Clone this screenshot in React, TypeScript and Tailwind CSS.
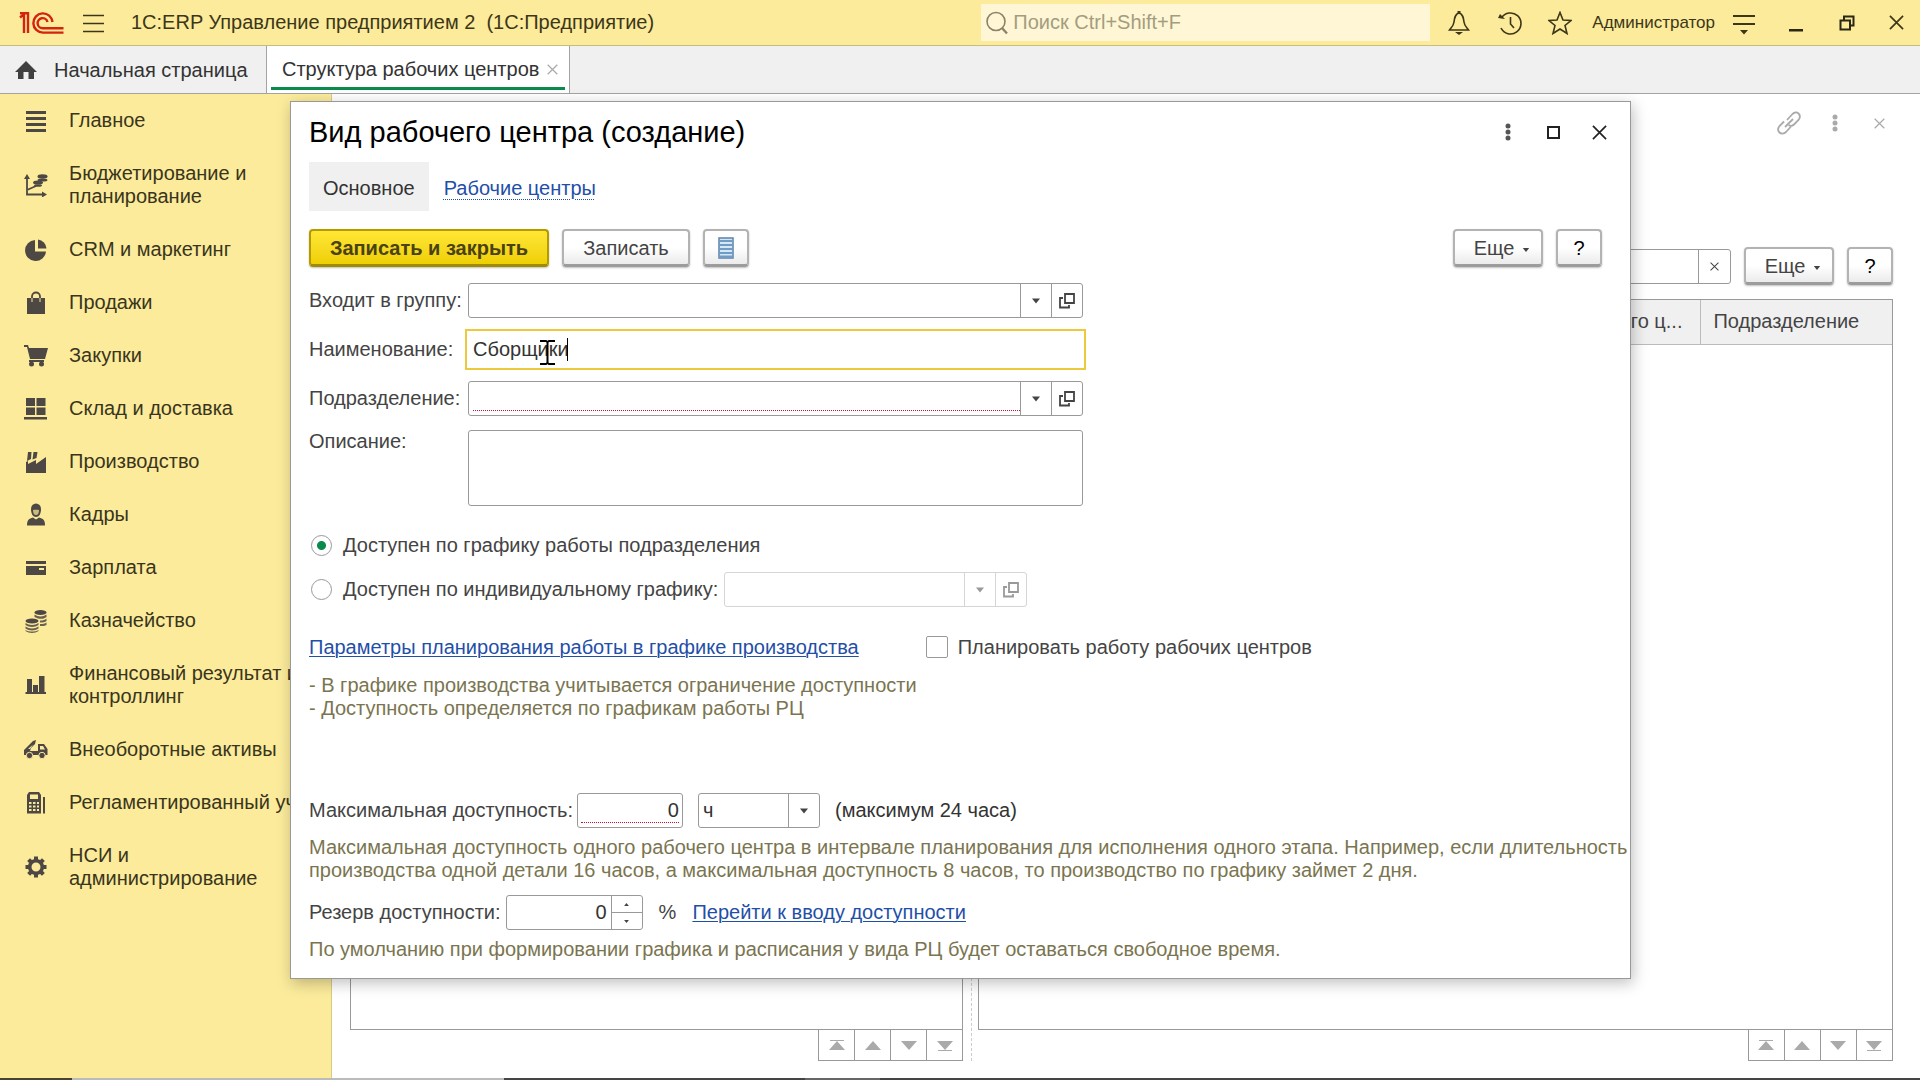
import React from "react";

type IconProps = { className?: string };

const Logo = () => (
  <svg className="h-6 w-12" viewBox="0 0 48 24" fill="none" stroke="#d4230f" strokeWidth="2.4">
    <path d="M3 6.5 L7 3.2 V22" />
    <path d="M3 2.2 H11 V22" />
    <path d="M35.5 11 A9.6 9.6 0 1 0 26 21.6 H46.5" />
    <path d="M30.5 11 A5 5 0 1 0 26 17.2 H46.5" />
  </svg>
);

const MenuIcon = () => (
  <svg className="h-6 w-6" viewBox="0 0 24 24" stroke="#3d3618" strokeWidth="1.6">
    <path d="M1 4.5 H22 M1 12.5 H22 M1 20.5 H22" />
  </svg>
);

const HomeIcon = () => (
  <svg className="h-6 w-6" viewBox="0 0 24 24" fill="#404040">
    <path d="M12 2 L23 13 H20 V20 H14.5 V13 H9.5 V20 H4 V13 H1 Z" />
  </svg>
);

const CrossIcon = ({ className }: IconProps) => (
  <svg className={className} viewBox="0 0 16 16" fill="none" stroke="currentColor" strokeWidth="1.8">
    <path d="M1 1 L15 15 M15 1 L1 15" />
  </svg>
);

const DotsIcon = ({ className }: IconProps) => (
  <svg className={className} viewBox="0 0 6 18" fill="currentColor">
    <circle cx="3" cy="3" r="2.5" />
    <circle cx="3" cy="9" r="2.5" />
    <circle cx="3" cy="15" r="2.5" />
  </svg>
);

const Caret = ({ className }: IconProps) => (
  <svg className={className} viewBox="0 0 8 5" fill="currentColor">
    <path d="M0 0 H8 L4 5 Z" />
  </svg>
);

const OpenIcon = () => (
  <svg className="h-4 w-4" viewBox="0 0 16 16" fill="none" stroke="currentColor" strokeWidth="1.8">
    <path d="M6 1 H15 V10 H6 Z" />
    <path d="M4 5 H1 V14.5 H10 V12" />
  </svg>
);

const icons: Record<string, React.ReactNode> = {
  main: <path d="M2 2 H22 V5 H2 Z M2 8 H22 V11 H2 Z M2 14 H22 V17 H2 Z M2 20 H22 V23 H2 Z" />,
  budget: (
    <>
      <path d="M3 4 V21.5 H20 M3 17 L12 13" fill="none" stroke="currentColor" strokeWidth="1.8" />
      <path d="M0 6 L3 1 L6 6 Z M18 18.5 L23 21.5 L18 24.5 Z" />
      <ellipse cx="18.5" cy="3.5" rx="5" ry="2.2" />
      <ellipse cx="18.5" cy="7" rx="5" ry="1.6" />
      <ellipse cx="14" cy="9.5" rx="5" ry="2" />
      <ellipse cx="14" cy="12.5" rx="4" ry="1.3" />
    </>
  ),
  crm: (
    <>
      <path d="M11 2 A10.5 10.5 0 1 0 22 13.5 H11 Z" />
      <path d="M14 1.5 A9.5 9.5 0 0 1 22.5 10.5 H14 Z" />
    </>
  ),
  sales: (
    <>
      <path d="M3 7 H21 V23 H3 Z" />
      <path d="M8 7 V5.5 A4 4 0 0 1 16 5.5 V7" fill="none" stroke="currentColor" strokeWidth="1.8" />
      <path d="M8 7 V11 M16 7 V11" stroke="#fbeb9b" />
    </>
  ),
  cart: (
    <>
      <path d="M0 1 H4 L5 4 H24 L21 15 H6 L3 3 H0 Z" />
      <path d="M5 16 H20 V18 H5 Z" />
      <circle cx="7.5" cy="20" r="2.5" />
      <circle cx="17.5" cy="20" r="2.5" />
    </>
  ),
  stock: <path d="M2 1 H11 V9 H2 Z M12.5 1 H21.5 V9 H12.5 Z M2 10.5 H11 V18 H2 Z M12.5 10.5 H21.5 V18 H12.5 Z M0 20 H23 V22.5 H0 Z" />,
  factory: (
    <>
      <path d="M2 12 L4 11 V14 L12 10 V14 L22 7 V23 H2 Z" />
      <path d="M4 2 H7.5 L7 9 L3 11 Z M9.5 2 H13.5 L12.5 8 L8.5 9.5 Z" />
    </>
  ),
  staff: (
    <>
      <path d="M7 6 A5 5.5 0 0 1 17 6 C17 11 15 14 12 14 C9 14 7 11 7 6 Z" />
      <path d="M9 7 C11 6.5 13 6.5 15 7 C15 10 14 12 12 12 C10 12 9 10 9 7 Z" fill="#c8bb7d" />
      <path d="M3 22.5 C3 17 5 15.5 9 14.5 L12 16.5 L15 14.5 C19 15.5 21 17 21 22.5 Z" />
    </>
  ),
  card: (
    <>
      <path d="M2 5 H22 V8 H2 Z M2 10 H22 V19 H2 Z" />
      <path d="M15 12 H20 V14 H15 Z" fill="#fbeb9b" />
    </>
  ),
  coins: (
    <>
      <ellipse cx="16.5" cy="3.5" rx="6" ry="2.6" />
      <path d="M10.5 5.5 C14 8 19 8 22.5 5.5 V8 C20 10 17 10 14 9.5 L10.500 8 Z M16 11.5 C19 11.500 21 11 22.500 9.500 V12 C21 13 19 13.500 16 13.500 Z M16 15 C19 15 21 14.500 22.500 13.500 V16 C21 17 19 17 16 17 Z" opacity=".85" />
      <ellipse cx="8" cy="12" rx="6.5" ry="2.6" />
      <path d="M1.5 14 C5 16.5 11 16.5 14.5 14 V16 C11 18.500 5 18.500 1.500 16 Z M1.500 17.500 C5 20 11 20 14.500 17.500 V19.500 C11 22 5 22 1.500 19.500 Z M1.500 21 C5 23 11 23 14.500 21 V22 C11 24.500 5 24.500 1.500 22 Z" opacity=".85" />
    </>
  ),
  chart: <path d="M3 6 H8 V19 H9 V12 H14 V19 H15 V3 H20.5 V19 H22 V21 H1.5 V19 H3 Z" />,
  truck: (
    <>
      <path d="M0 12 L9 3 L12 2 L11 6 L7 10 L6 13 H14 V6 H20 L23.5 11 V17 H0 Z" />
      <path d="M16 8 H19 L21 11.5 H16 Z M4 11 L9 6.5 L6 11 Z" fill="#fbeb9b" />
      <circle cx="5.5" cy="17.5" r="3.2" stroke="#fbeb9b" />
      <circle cx="18" cy="17.5" r="3.2" stroke="#fbeb9b" />
    </>
  ),
  report: (
    <>
      <path d="M5 1 H15 L17 4 V22.5 H3 V4 Z M19 6 H21 V22.5 H19 Z" />
      <path d="M6 3.5 H14 V8 H6 Z M5 11 H7.5 V13 H5 Z M9 11 H11.5 V13 H9 Z M13 11 H15 V13 H13 Z M5 14.5 H7.5 V16.5 H5 Z M9 14.5 H11.5 V16.5 H9 Z M13 14.5 H15 V16.5 H13 Z M5 18 H7.5 V20 H5 Z M9 18 H11.5 V20 H9 Z M13 18 H15 V20 H13 Z" fill="#fbeb9b" />
    </>
  ),
  gear: (
    <>
      <circle cx="12" cy="12" r="6.3" fill="none" stroke="currentColor" strokeWidth="3.6" />
      <path
        d="M12 1.5 V5 M12 19 V22.5 M1.5 12 H5 M19 12 H22.5 M4.6 4.6 L7 7 M17 17 L19.4 19.4 M4.6 19.4 L7 17 M17 7 L19.4 4.6"
        stroke="currentColor"
        strokeWidth="4"
      />
    </>
  ),
};

const sections = [
  { icon: "main", label: "Главное" },
  { icon: "budget", label: "Бюджетирование и\nпланирование" },
  { icon: "crm", label: "CRM и маркетинг" },
  { icon: "sales", label: "Продажи" },
  { icon: "cart", label: "Закупки" },
  { icon: "stock", label: "Склад и доставка" },
  { icon: "factory", label: "Производство" },
  { icon: "staff", label: "Кадры" },
  { icon: "card", label: "Зарплата" },
  { icon: "coins", label: "Казначейство" },
  { icon: "chart", label: "Финансовый результат и\nконтроллинг" },
  { icon: "truck", label: "Внеоборотные активы" },
  { icon: "report", label: "Регламентированный учет" },
  { icon: "gear", label: "НСИ и\nадминистрирование" },
];

const buttonBase =
  "flex h-[38px] items-center justify-center rounded-[4px] border-2 border-b-[3px] pt-px shadow-[0_1px_2px_rgba(0,0,0,0.25)]";
const grayButton = `${buttonBase} border-[#b3b3b3] border-b-[#9c9c9c] bg-linear-to-b from-white from-50% to-[#ebebeb] text-[#444]`;

const MoreButton = () => (
  <button className={`${grayButton} w-[90px] gap-2 pl-2`}>
    Еще
    <Caret className="mt-1 h-1 w-2" />
  </button>
);

const HelpButton = () => <button className={`${grayButton} w-[46px] text-black`}>?</button>;

const Header = () => (
  <header className="flex h-[46px] shrink-0 items-center border-b border-[#c9bd7c] bg-[#fbeb9b] pr-4 pl-[17px] text-[#3d3618]">
    <Logo />
    <button aria-label="Меню" className="ml-[17px]">
      <MenuIcon />
    </button>
    <h1 className="ml-[25px] whitespace-pre">1С:ERP Управление предприятием 2  (1С:Предприятие)</h1>
    <div className="ml-auto flex h-[37px] w-[449px] items-center bg-[#fff6d5] pl-1">
      <svg className="h-6 w-6" viewBox="0 0 24 24" fill="none" stroke="#8a8468" strokeWidth="1.6">
        <circle cx="11" cy="10.5" r="9" />
        <path d="M17 17 L22 22.5" strokeWidth="2.4" />
      </svg>
      <input
        aria-label="Поиск"
        placeholder="Поиск Ctrl+Shift+F"
        className="ml-1 h-full flex-1 bg-transparent outline-none placeholder:text-[#a39d80]"
      />
    </div>
    <button aria-label="Уведомления" className="ml-[17px]">
      <svg className="h-6 w-6" viewBox="0 0 24 24" fill="none" stroke="currentColor" strokeWidth="1.6">
        <path d="M12 2 C8 3 7.5 7 7 11 C6.5 15 4.5 16 2.5 19 H21.5 C19.5 16 17.5 15 17 11 C16.5 7 16 3 12 2 Z" />
        <path d="M8 21 H16 L12 24 Z M10.5 0 H13.5 V3 H10.5 Z" fill="currentColor" stroke="none" />
      </svg>
    </button>
    <button aria-label="История" className="ml-[27px]">
      <svg className="h-6 w-6" viewBox="0 0 24 24" fill="none" stroke="currentColor" strokeWidth="1.6">
        <path d="M3.5 7 A10.5 10.5 0 1 1 3 17" />
        <path d="M12.5 6 V13 L16 17" />
        <path d="M0 7 L7 8 L2 3 Z" fill="currentColor" stroke="none" />
      </svg>
    </button>
    <button aria-label="Избранное" className="ml-[26px]">
      <svg className="h-6 w-6" viewBox="0 0 24 24" fill="none" stroke="currentColor" strokeWidth="1.6">
        <path d="M12 1.5 L15 9 L23 9.5 L17 14.5 L19 22.5 L12 18 L5 22.5 L7 14.5 L1 9.5 L9 9 Z" />
      </svg>
    </button>
    <a href="#user" className="ml-5 text-[17px]">
      Администратор
    </a>
    <button aria-label="Сервис" className="ml-[17px]">
      <svg className="h-6 w-6" viewBox="0 0 24 24" fill="currentColor">
        <path d="M1 4 H23 V6 H1 Z M1 12 H23 V14 H1 Z M8 19 H16 L12 23.5 Z" />
      </svg>
    </button>
    <button aria-label="Свернуть" className="ml-7">
      <svg className="h-6 w-6" viewBox="0 0 24 24" fill="#2b2715">
        <path d="M5 18 H19 V20.500 H5 Z" />
      </svg>
    </button>
    <button aria-label="Восстановить" className="ml-[27px]">
      <svg className="h-6 w-6" viewBox="0 0 24 24" fill="none" stroke="#2b2715" strokeWidth="2">
        <path d="M5.5 9.5 H15 V18.5 H5.5 Z M9 9 V5.5 H18.5 V14.5 H15.5" />
      </svg>
    </button>
    <button aria-label="Закрыть" className="ml-[30px]">
      <CrossIcon className="h-[15px] w-[15px]" />
    </button>
  </header>
);

const Tabs = () => (
  <nav className="flex h-12 shrink-0 border-b border-[#a3a3a3] bg-[#f0f0f0] text-[#333]">
    <a href="#home" className="flex w-[266px] items-center pt-[2px] pl-[14px]">
      <HomeIcon />
      <span className="ml-4">Начальная страница</span>
    </a>
    <div className="flex flex-col border-x border-[#a3a3a3] bg-white px-1">
      <div className="flex flex-1 items-center pt-[6px] pr-[7px] pl-[11px]">
        <a href="#structure">Структура рабочих центров</a>
        <button aria-label="Закрыть вкладку" className="ml-2 text-[#aaa]">
          <CrossIcon className="h-[11px] w-[11px]" />
        </button>
      </div>
      <div className="mb-[3px] h-[3px] bg-[#0a8a4b]" />
    </div>
  </nav>
);

const Sidebar = () => (
  <aside className="w-[332px] shrink-0 overflow-hidden border-r border-[#d9cb85] bg-[#fbeb9b]">
    {sections.map((s) => (
      <a key={s.icon} href={`#${s.icon}`} className="flex items-center py-[15px] pl-6 text-[#3a351c]">
        <svg className="-my-1 h-6 w-6 shrink-0 text-[#4d4844]" viewBox="0 0 24 24" fill="currentColor">
          {icons[s.icon]}
        </svg>
        <span className="ml-[21px] whitespace-pre">{s.label}</span>
      </a>
    ))}
  </aside>
);

const pagerShapes = [
  { label: "В начало", d: "M1 0 H15 V1 H1 Z M8 1 L16 10 H0 Z" },
  { label: "Выше", d: "M8 1 L16 10 H0 Z" },
  { label: "Ниже", d: "M0 1 H16 L8 10 Z" },
  { label: "В конец", d: "M0 1 H16 L8 10 Z M1 10 H15 V11 H1 Z" },
];

const Pager = () => (
  <div className="flex self-end border-l border-[#999]">
    {pagerShapes.map((p) => (
      <button
        key={p.label}
        aria-label={p.label}
        className="flex h-[31px] w-9 items-center justify-center border-r border-b border-[#999]"
      >
        <svg className="h-[11px] w-4" viewBox="0 0 16 11" fill="#aaa">
          <path d={p.d} />
        </svg>
      </button>
    ))}
  </div>
);

const Workspace = () => (
  <main className="flex flex-1 flex-col bg-white pr-[27px] pb-[17px] pl-[18px]">
    <div className="flex h-[58px] items-center justify-end text-[#aaa]">
      <button aria-label="Ссылка">
        <svg className="h-6 w-6" viewBox="0 0 24 24" fill="none" stroke="currentColor" strokeWidth="1.8">
          <path d="M10 9 L15 3.5 C17 1 20 1 21.5 2.5 C23.5 4.5 23 7 21.5 9 L17 13.5 C15.5 15 13 15 11.5 14" />
          <path d="M14 15.5 L9 21 C7 23 4 23 2.5 21.5 C0.5 19.5 1 17 2.5 15 L7 10.5" />
          <path d="M8 16 L16 8" />
        </svg>
      </button>
      <button aria-label="Действия" className="ml-[31px]">
        <DotsIcon className="h-[18px] w-[6px]" />
      </button>
      <button aria-label="Закрыть" className="mr-2 ml-9">
        <CrossIcon className="h-[11px] w-[11px]" />
      </button>
    </div>
    <div className="grid flex-1 grid-cols-[67fr_100fr] gap-[15px]">
      <section className="relative flex flex-col pt-[147px]">
        <div className="flex-1 border border-[#999]" />
        <Pager />
        <div className="absolute top-0 -right-[9px] bottom-0 border-r border-dashed border-[#ccc]" />
      </section>
      <section className="flex flex-col pt-[95px]">
        <div className="flex items-center gap-[13px]">
          <div className="ml-auto flex h-[35px] w-[400px] rounded-[3px] border border-[#999]">
            <input aria-label="Поиск в списке" className="min-w-0 flex-1 outline-none" />
            <button aria-label="Очистить" className="flex w-8 items-center justify-center border-l border-[#999] text-[#444]">
              <CrossIcon className="h-[9px] w-[9px]" />
            </button>
          </div>
          <MoreButton />
          <HelpButton />
        </div>
        <div className="mt-[14px] flex-1 border border-[#999]">
          <table className="w-full table-fixed text-left text-[#444]">
            <thead>
              <tr className="h-11 border-b border-[#bbb] bg-[#f0f0f0]">
                <th className="pr-[18px] text-right font-normal">Вид рабочего ц...</th>
                <th className="w-[191px] border-l border-[#bbb] pl-3 font-normal">Подразделение</th>
              </tr>
            </thead>
          </table>
        </div>
        <Pager />
      </section>
    </div>
  </main>
);

type PickerProps = { id: string; label?: string; required?: boolean; disabled?: boolean; className?: string };

const Picker = ({ id, label, required, disabled, className = "" }: PickerProps) => {
  const line = disabled ? "border-[#d5d5d5] text-[#999]" : "border-[#999] text-[#444]";
  return (
    <div className={`flex h-[35px] rounded-[3px] border ${line} ${className}`}>
      <div className="flex min-w-0 flex-1 pb-1">
        <input
          id={id}
          aria-label={label}
          disabled={disabled}
          className={`ml-1 min-w-0 flex-1 outline-none ${required ? "border-b border-dotted border-[#c8102e]" : ""}`}
        />
      </div>
      <button aria-label="Выбрать из списка" disabled={disabled} className={`flex w-[31px] items-center justify-center border-l ${line}`}>
        <Caret className="h-[6px] w-2" />
      </button>
      <button aria-label="Открыть" disabled={disabled} className={`flex w-[31px] items-center justify-center border-l ${line}`}>
        <OpenIcon />
      </button>
    </div>
  );
};

const linkStyle = "text-[#1f4fa8] underline decoration-1 underline-offset-2";
const hintStyle = "text-[#7a7550]";
const radioStyle =
  "h-[21px] w-[21px] appearance-none rounded-full border border-[#999] bg-white checked:bg-[radial-gradient(circle,#0a8a4b_4px,white_5px)]";

const Dialog = () => (
  <div
    role="dialog"
    aria-labelledby="dialog-title"
    className="absolute top-[7px] right-[289px] left-[290px] border border-[#999] bg-white pb-[17px] pl-[18px] text-[#444] shadow-[2px_4px_14px_rgba(0,0,0,0.25)]"
  >
    <div className="flex h-[60px] items-center pr-[23px]">
      <h2 id="dialog-title" className="text-[29px] text-black">
        Вид рабочего центра (создание)
      </h2>
      <button aria-label="Действия" className="ml-auto text-[#555]">
        <DotsIcon className="h-[18px] w-[6px]" />
      </button>
      <button aria-label="Развернуть" className="ml-9 h-[13px] w-[13px] border-2 border-[#222]" />
      <button aria-label="Закрыть" className="ml-8 text-[#222]">
        <CrossIcon className="h-[15px] w-[15px]" />
      </button>
    </div>

    <div className="pr-7">
      <div className="flex h-[49px]">
        <a href="#general" className="flex items-center bg-[#f0f0f0] px-[14px] pt-[3px] text-[#333]">
          Основное
        </a>
        <a
          href="#centers"
          className="ml-[15px] flex items-center pt-[3px] text-[#1f4fa8] underline decoration-dotted decoration-1 underline-offset-4"
        >
          Рабочие центры
        </a>
      </div>

      <div className="mt-[18px] flex gap-[13px]">
        <button
          className={`${buttonBase} w-[240px] border-[#b39b00] border-b-[#a08a00] bg-linear-to-b from-[#ffe733] to-[#efcf00] font-bold text-[#4a4212]`}
        >
          Записать и закрыть
        </button>
        <button className={`${grayButton} w-[128px]`}>Записать</button>
        <button aria-label="Отчет" className={`${grayButton} w-[46px]`}>
          <svg className="h-[22px] w-4" viewBox="0 0 16 22">
            <path d="M1 1 H15 V21 H1 Z" fill="#d6e6f3" stroke="#5b83ab" strokeWidth="1.5" />
            <path d="M1 4 H15 M1 8 H15 M1 12 H15 M1 16 H15 M1 19.5 H15" stroke="#6f9cc5" strokeWidth="1.8" />
          </svg>
        </button>
        <div className="ml-auto flex gap-[13px]">
          <MoreButton />
          <HelpButton />
        </div>
      </div>

      <div className="mt-4 grid grid-cols-[159px_615px] items-center gap-y-[14px]">
        <label htmlFor="group">Входит в группу:</label>
        <Picker id="group" />
        <label htmlFor="name">Наименование:</label>
        <div className="relative">
          <input
            id="name"
            defaultValue="Сборщики"
            className="block h-[35px] w-full pl-[5px] text-[#333] outline-2 outline-offset-1 outline-[#ecca3c]"
          />
          <span className="absolute top-[6px] left-[99px] h-[23px] w-px bg-black" />
          <svg className="absolute top-2 left-[72px] h-[25px] w-[15px]" viewBox="0 0 15 25" fill="none" stroke="black" strokeWidth="2">
            <path d="M0 1 H6 L7.5 2 L9 1 H15 M7.5 2 V23 M0 24 H6 L7.5 23 L9 24 H15" />
          </svg>
        </div>
        <label htmlFor="department">Подразделение:</label>
        <Picker id="department" required />
        <label htmlFor="description" className="self-start">
          Описание:
        </label>
        <textarea id="description" className="block h-[76px] resize-none rounded-[3px] border border-[#999] outline-none" />
      </div>

      <div className="mt-[27px] flex h-6 items-center pl-[2px]">
        <input type="radio" id="byDepartment" name="schedule" defaultChecked className={radioStyle} />
        <label htmlFor="byDepartment" className="ml-[11px]">
          Доступен по графику работы подразделения
        </label>
      </div>
      <div className="mt-[15px] flex items-center pl-[2px]">
        <input type="radio" id="individual" name="schedule" className={radioStyle} />
        <label htmlFor="individual" className="ml-[11px]">
          Доступен по индивидуальному графику:
        </label>
        <Picker id="schedule" label="Индивидуальный график" disabled className="ml-[6px] w-[303px]" />
      </div>

      <div className="mt-7 flex h-6 items-center">
        <a href="#planning" className={linkStyle}>
          Параметры планирования работы в графике производства
        </a>
        <input type="checkbox" id="plan" className="ml-[67px] h-[22px] w-[22px] appearance-none rounded-[2px] border border-[#999]" />
        <label htmlFor="plan" className="ml-[10px]">
          Планировать работу рабочих центров
        </label>
      </div>
      <p className={`mt-[15px] ${hintStyle}`}>
        - В графике производства учитывается ограничение доступности
        <br />- Доступность определяется по графикам работы РЦ
      </p>

      <div className="mt-[73px] flex items-center">
        <label htmlFor="maxAvailability">Максимальная доступность:</label>
        <div className="ml-1 flex h-[35px] w-[106px] rounded-[3px] border border-[#999] px-[3px] pb-1">
          <input
            id="maxAvailability"
            defaultValue="0"
            className="min-w-0 flex-1 border-b border-dotted border-[#c8102e] pt-1 text-right text-[#333] outline-none"
          />
        </div>
        <div className="relative ml-[15px]">
          <select aria-label="Единица измерения" className="block h-[35px] w-[122px] appearance-none rounded-[3px] border border-[#999] pl-1 text-[#333]">
            <option>ч</option>
          </select>
          <span className="pointer-events-none absolute inset-y-0 right-0 flex w-8 items-center justify-center border-l border-[#999]">
            <Caret className="h-[6px] w-2" />
          </span>
        </div>
        <span className="ml-[15px] text-[#333]">(максимум 24 часа)</span>
      </div>
      <p className={`mt-2 whitespace-nowrap ${hintStyle}`}>
        Максимальная доступность одного рабочего центра в интервале планирования для исполнения одного этапа. Например, если длительность
        <br />
        производства одной детали 16 часов, а максимальная доступность 8 часов, то производство по графику займет 2 дня.
      </p>

      <div className="mt-[13px] flex items-center">
        <label htmlFor="reserve">Резерв доступности:</label>
        <div className="ml-[5px] flex h-[35px] w-[137px] rounded-[3px] border border-[#999]">
          <input id="reserve" defaultValue="0" className="min-w-0 flex-1 pr-1 text-right text-[#333] outline-none" />
          <div className="flex w-[31px] flex-col border-l border-[#999]">
            <button aria-label="Больше" className="flex flex-1 items-center justify-center border-b border-[#999]">
              <Caret className="h-[3px] w-[5px] rotate-180" />
            </button>
            <button aria-label="Меньше" className="flex flex-1 items-center justify-center">
              <Caret className="h-[3px] w-[5px]" />
            </button>
          </div>
        </div>
        <span className="ml-4">%</span>
        <a href="#availability" className={`ml-4 ${linkStyle}`}>
          Перейти к вводу доступности
        </a>
      </div>
      <p className={`mt-2 ${hintStyle}`}>
        По умолчанию при формировании графика и расписания у вида РЦ будет оставаться свободное время.
      </p>
    </div>
  </div>
);

const BottomStrip = () => (
  <div className="flex h-[2px] shrink-0 bg-[#444]">
    <div className="w-[72px] bg-[#4a432c]" />
    <div className="w-[432px] bg-[#bbb]" />
    <div className="ml-[301px] w-[75px] bg-[#666]" />
  </div>
);

const App = () => {
  return (
    <div className="flex h-screen flex-col overflow-hidden font-['Liberation_Sans',Arial,sans-serif] text-[20px] leading-[23px]">
      <Header />
      <Tabs />
      <div className="relative flex flex-1">
        <Sidebar />
        <Workspace />
        <Dialog />
      </div>
      <BottomStrip />
    </div>
  );
};

export default App;
